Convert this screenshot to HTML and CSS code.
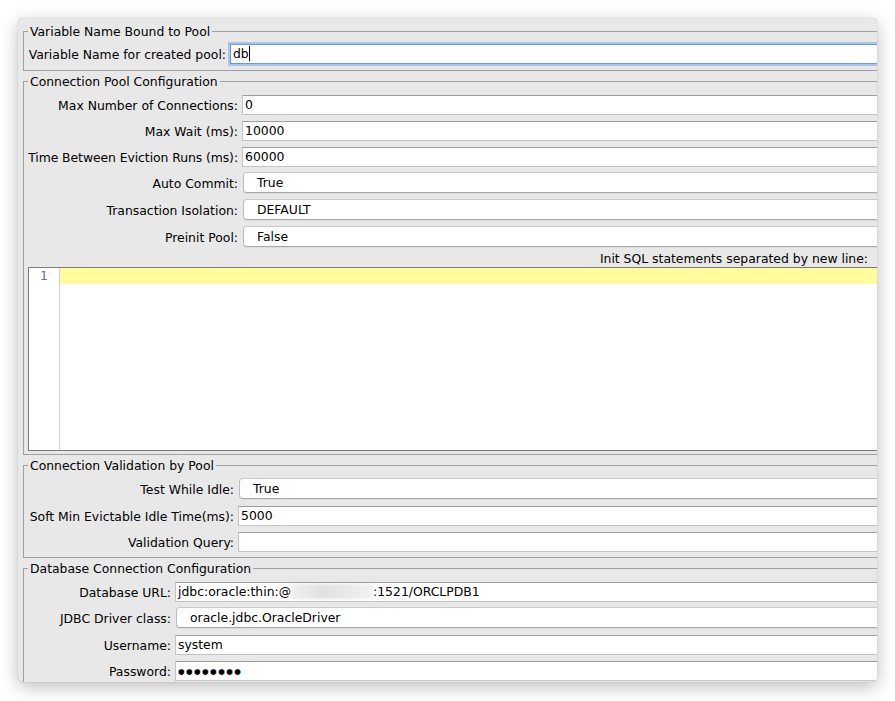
FILE: index.html
```html
<!DOCTYPE html>
<html lang="en">
<head>
<meta charset="utf-8">
<title>JDBC Connection Configuration</title>
<link rel="stylesheet" href="styles.css">
</head>
<body>
<div class="window">
  <fieldset class="group">
    <legend class="group-title">Variable Name Bound to Pool</legend>
    <div class="form form-var">
      <span class="lbl">Variable Name for created pool:</span>
      <div class="field focus">db<span class="caret"></span></div>
    </div>
  </fieldset>

  <fieldset class="group">
    <legend class="group-title">Connection Pool Configuration</legend>
    <div class="form form-pool">
      <span class="lbl">Max Number of Connections:</span>
      <div class="field">0</div>
      <span class="lbl">Max Wait (ms):</span>
      <div class="field">10000</div>
      <span class="lbl lbl-tight">Time Between Eviction Runs (ms):</span>
      <div class="field">60000</div>
      <span class="lbl">Auto Commit:</span>
      <div class="combo">True</div>
      <span class="lbl">Transaction Isolation:</span>
      <div class="combo">DEFAULT</div>
      <span class="lbl">Preinit Pool:</span>
      <div class="combo">False</div>
    </div>
    <div class="init-label">Init SQL statements separated by new line:</div>
    <div class="sql">
      <div class="gutter">1</div>
      <div class="code"><div class="hl"></div></div>
    </div>
  </fieldset>

  <fieldset class="group">
    <legend class="group-title">Connection Validation by Pool</legend>
    <div class="form form-valid">
      <span class="lbl">Test While Idle:</span>
      <div class="combo">True</div>
      <span class="lbl">Soft Min Evictable Idle Time(ms):</span>
      <div class="field">5000</div>
      <span class="lbl">Validation Query:</span>
      <div class="field"></div>
    </div>
  </fieldset>

  <fieldset class="group">
    <legend class="group-title">Database Connection Configuration</legend>
    <div class="form form-db">
      <span class="lbl">Database URL:</span>
      <div class="field">jdbc:oracle:thin:@<span class="redact"></span>:1521/ORCLPDB1</div>
      <span class="lbl">JDBC Driver class:</span>
      <div class="combo">oracle.jdbc.OracleDriver</div>
      <span class="lbl">Username:</span>
      <div class="field">system</div>
      <span class="lbl">Password:</span>
      <div class="field"><span class="dots">●●●●●●●●</span></div>
    </div>
  </fieldset>
</div>
</body>
</html>
```

FILE: styles.css
```css
* { box-sizing: border-box; }

html, body {
  margin: 0;
  background: #ffffff;
}

body {
  font-family: "DejaVu Sans", "Liberation Sans", sans-serif;
  font-size: 12.4px;
  color: #000000;
  width: 895px;
  height: 701px;
  overflow: hidden;
}

.window {
  margin: 18px 0 0 18px;
  width: 859px;
  height: 664px;
  background: #e8e8e8;
  border-radius: 5px;
  overflow: hidden;
  padding: 5px 0 0 5px;
  box-shadow: 0 5px 18px rgba(0, 0, 0, 0.26), 0 0 1px rgba(0, 0, 0, 0.35);
}

.group {
  margin: 2px -30px 0 0;
  padding: 0 4px;
  border: 1px solid #a0a0a0;
  min-width: 0;
}

.group:first-child { margin-top: 0; }

.group-title {
  padding: 2px 2px 0;
  height: 16px;
  line-height: 14px;
  white-space: nowrap;
}

.form {
  display: grid;
  column-gap: 4px;
  align-items: center;
}

.form-var { grid-template-columns: 198px 1fr; padding: 2px 0 3px; }
.form-pool { grid-template-columns: 210px 1fr; padding-top: 3px; }
.form-valid { grid-template-columns: 206px 1fr; padding: 3px 0 2px; }
.form-db { grid-template-columns: 143px 1fr; padding-top: 3px; }

.lbl {
  justify-self: end;
  white-space: nowrap;
  line-height: 15px;
}

.lbl-tight { letter-spacing: -0.07px; }

.field {
  height: 20px;
  margin: 3px 0;
  background: #ffffff;
  border: 1px solid #c4c4c4;
  border-top-color: #9d9d9d;
  padding: 0 2px;
  line-height: 18px;
  white-space: nowrap;
  overflow: hidden;
}

.field.focus {
  border-color: #6b9be1;
  box-shadow: 0 0 0 2px #a8c5ef;
}

.caret {
  display: inline-block;
  width: 1px;
  height: 15px;
  background: #000;
  vertical-align: -3px;
}

.combo {
  height: 21px;
  margin: 2px 0 4px 1px;
  background: #ffffff;
  border: 1px solid #bcbcbc;
  border-top-color: #c9c9c9;
  border-bottom-color: #a9a9a9;
  border-radius: 4px 0 0 4px;
  padding-left: 13px;
  line-height: 19px;
  white-space: nowrap;
  box-shadow: 0 1px 0 rgba(0, 0, 0, 0.05);
}

.init-label {
  height: 16px;
  line-height: 16px;
  text-align: right;
  padding-right: 34px;
  white-space: nowrap;
}

.sql {
  display: flex;
  height: 184px;
  border: 1px solid #7b7b7b;
  background: #ffffff;
  margin-bottom: 3px;
}

.gutter {
  width: 31px;
  flex: none;
  border-right: 1px solid #d2d2d2;
  text-align: center;
  line-height: 16px;
  color: #6f6f6f;
  font-size: 12.4px;
}

.code { flex: 1; }

.hl {
  height: 16px;
  background: #fffc9b;
}

.redact {
  display: inline-block;
  width: 82px;
  height: 15px;
  vertical-align: -3px;
  background: linear-gradient(90deg, #efefef, #e0e0e0 40%, #e9e9e9 70%, #f2f2f2);
  filter: blur(1.5px);
}

.dots {
  font-size: 7.6px;
  letter-spacing: 1.4px;
  vertical-align: 1px;
}
```
